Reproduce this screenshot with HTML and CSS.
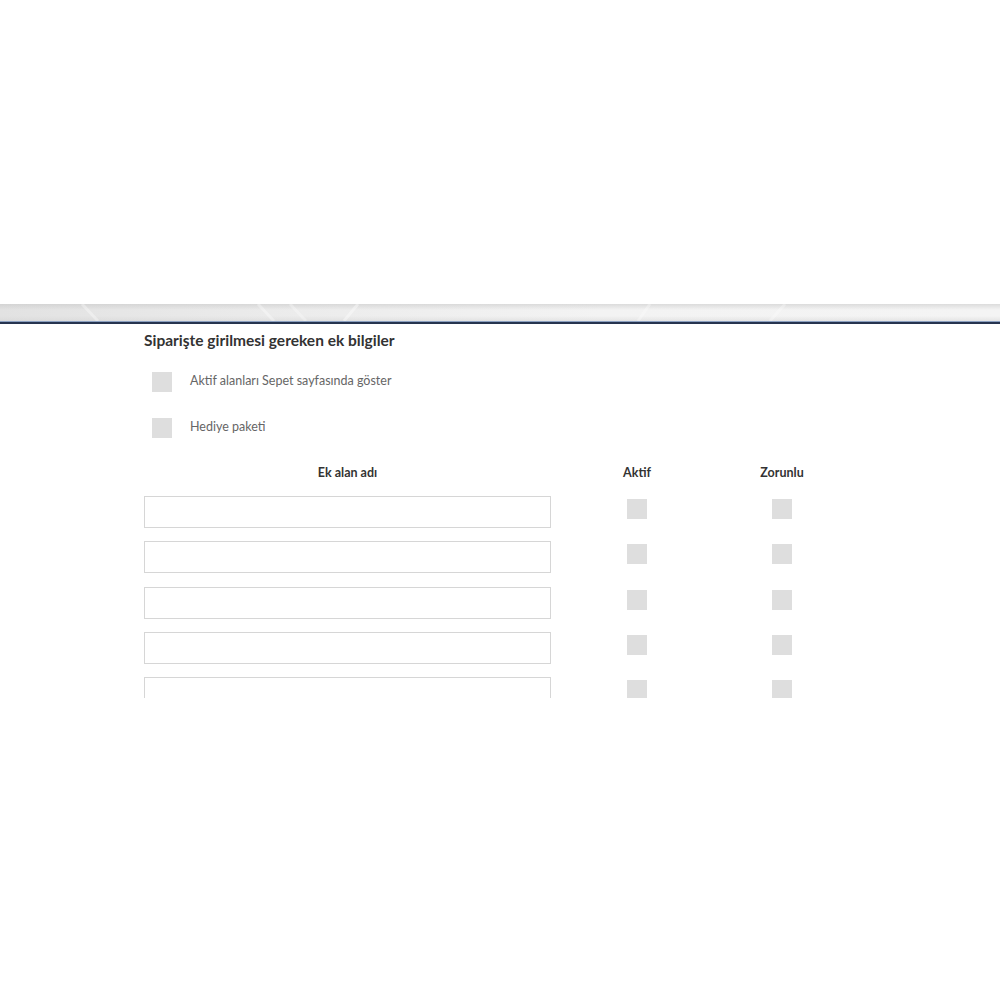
FILE: index.html
```html
<!DOCTYPE html>
<html lang="tr">
<head>
<meta charset="utf-8">
<link rel="stylesheet" href="styles.css">
</head>
<body>
<div class="top-space"></div>
<div class="banner">
  <svg class="streaks" width="1000" height="17" viewBox="0 0 1000 17" preserveAspectRatio="none">
    <path d="M82 0 L98 17" stroke="#ffffff" stroke-width="3" opacity="0.35"/>
    <path d="M258 0 L274 17" stroke="#ffffff" stroke-width="3" opacity="0.35"/>
    <path d="M290 0 L306 17" stroke="#ffffff" stroke-width="3" opacity="0.3"/>
    <path d="M358 0 L344 17" stroke="#ffffff" stroke-width="3" opacity="0.4"/>
    <path d="M650 0 L638 17" stroke="#ffffff" stroke-width="3" opacity="0.3"/>
    <path d="M785 0 L770 17" stroke="#ffffff" stroke-width="3" opacity="0.3"/>
  </svg>
</div>
<div class="rule"></div>
<div class="content">
  <h2 class="title">Siparişte girilmesi gereken ek bilgiler</h2>
  <div class="option"><span class="box"></span><span class="label">Aktif alanları Sepet sayfasında göster</span></div>
  <div class="option"><span class="box"></span><span class="label">Hediye paketi</span></div>
  <div class="table">
    <div class="th">Ek alan adı</div>
    <div class="th">Aktif</div>
    <div class="th">Zorunlu</div>

    <div class="cell"><div class="input"></div></div>
    <div class="cell center"><span class="sbox"></span></div>
    <div class="cell center"><span class="sbox"></span></div>

    <div class="cell"><div class="input"></div></div>
    <div class="cell center"><span class="sbox"></span></div>
    <div class="cell center"><span class="sbox"></span></div>

    <div class="cell"><div class="input"></div></div>
    <div class="cell center"><span class="sbox"></span></div>
    <div class="cell center"><span class="sbox"></span></div>

    <div class="cell"><div class="input"></div></div>
    <div class="cell center"><span class="sbox"></span></div>
    <div class="cell center"><span class="sbox"></span></div>

    <div class="cell"><div class="input"></div></div>
    <div class="cell center"><span class="sbox"></span></div>
    <div class="cell center"><span class="sbox"></span></div>
  </div>
</div>
</body>
</html>
```
FILE: styles.css
```css
html, body {
  margin: 0;
  padding: 0;
  background: #ffffff;
  font-family: Lato, "Open Sans", "Liberation Sans", sans-serif;
}
.top-space {
  height: 304px;
}
.banner {
  position: relative;
  height: 17px;
  background:
    linear-gradient(to bottom, rgba(200,200,200,0.55) 0%, rgba(255,255,255,0.0) 35%, rgba(255,255,255,0.0) 70%, rgba(210,210,210,0.45) 100%),
    linear-gradient(to right, #e2e2e2 0%, #ececec 30%, #f3f3f3 60%, #f4f4f4 100%);
  overflow: hidden;
}
.streaks {
  position: absolute;
  left: 0;
  top: 0;
}
.rule {
  height: 2px;
  background: #26344f;
  border-top: 1px solid #8ba0c0;
}
.content {
  padding-left: 144px;
  height: 374px;
  overflow: hidden;
}
.title {
  margin: 6px 0 0 0;
  font-size: 15.5px;
  line-height: 20px;
  font-weight: 700;
  color: #333333;
}
.option {
  display: flex;
  align-items: center;
  gap: 18px;
  padding-left: 8px;
  margin-top: 22px;
  height: 20px;
}
.option + .option {
  margin-top: 26px;
}
.box {
  width: 20px;
  height: 20px;
  background: #dedede;
  flex: none;
}
.label {
  font-size: 12.5px;
  line-height: 16px;
  color: #666666;
  position: relative;
  top: -1px;
}
.table {
  display: grid;
  grid-template-columns: 407px 172px 118px;
  grid-auto-rows: 45.25px;
  grid-template-rows: 31px;
  margin-top: 27px;
}
.th {
  text-align: center;
  font-size: 12.5px;
  font-weight: 700;
  color: #333333;
  line-height: 16px;
}
.cell {
  display: flex;
  align-items: flex-start;
}
.center {
  justify-content: center;
  padding-top: 3px;
}
.input {
  width: 405px;
  height: 30px;
  border: 1px solid #d6d6d6;
  background: #ffffff;
}
.sbox {
  width: 20px;
  height: 20px;
  background: #dedede;
}
```
